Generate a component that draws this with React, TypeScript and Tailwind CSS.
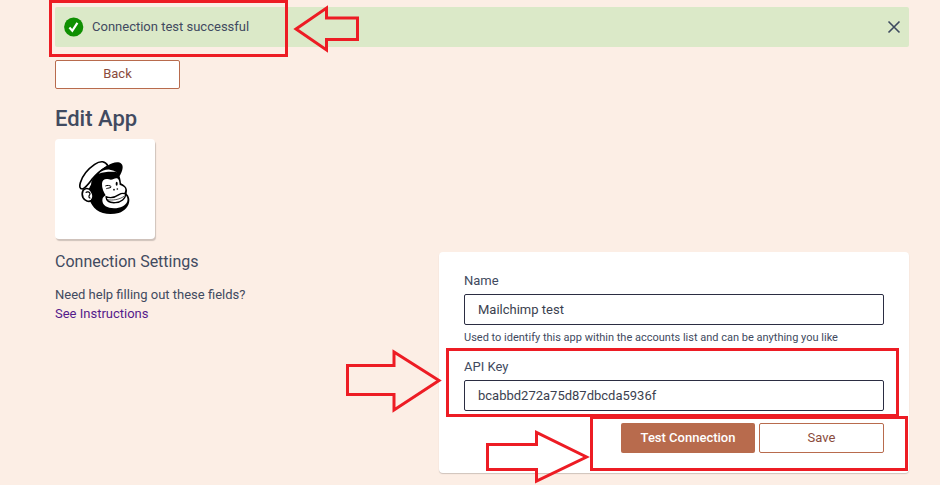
import React from "react";

type ArrowProps = {
  points: string;
  viewBox: string;
  className: string;
};

const Arrow: React.FC<ArrowProps> = ({ points, viewBox, className }) => (
  <svg
    viewBox={viewBox}
    className={`absolute pointer-events-none ${className}`}
    fill="none"
    stroke="#ed1c24"
    strokeWidth="3"
    aria-hidden="true"
  >
    <polygon points={points} />
  </svg>
);

const Highlight = ({ className }: { className: string }) => (
  <div className={`absolute pointer-events-none border-3 border-[#ed1c24] ${className}`} />
);

const MailchimpLogo = () => (
  <svg viewBox="105 177 180 180" className="w-[60px] h-[60px]" role="img" aria-label="Mailchimp">
    {/* head */}
    <path
      d="M146 268C156 244 170 228 186 218L236 222C240 230 242 240 243 250C252 254 260 261 261 270C261 275 260 278 260 281C266 287 269 295 268 302C267 318 254 333 236 339C214 345 186 343 170 330C159 321 153 311 150 303Z"
      fill="#000"
    />
    {/* cap */}
    <path
      d="M128 267C118 267 118 258 121 248C127 228 145 206 164 193C182 181 196 183 204 198C186 209 168 223 156 238C146 251 138 262 128 267Z"
      fill="#fff"
      stroke="#000"
      strokeWidth="5"
      strokeLinejoin="round"
    />
    <path
      d="M154 246C162 226 182 206 203 197C216 187 236 183 244 191C252 199 247 213 239 228C224 220 202 221 186 228C172 235 160 250 153 264Z"
      fill="#000"
    />
    <path d="M176 221C186 212 197 208 209 209C218 210 225 214 232 217C214 214 193 216 176 221Z" fill="#fff" />
    {/* ear */}
    <path
      d="M129 272C134 263 147 264 153 272C160 282 161 294 154 301C147 307 134 303 129 293C126 286 126 278 129 272Z"
      fill="#fff"
      stroke="#000"
      strokeWidth="5"
    />
    <path d="M137 278C142 273 149 276 150 281C150 285 146 286 147 290C147 293 149 294 151 293" fill="none" stroke="#000" strokeWidth="3.5" />
    {/* face */}
    <path
      d="M186 251C186 239 196 234 207 238C216 241 221 236 229 235C236 235 238 242 239 255C248 257 256 262 256 269C256 276 251 279 253 282C261 287 264 295 262 304C257 318 241 325 222 325C202 325 187 317 187 301C187 292 193 288 197 286C192 277 185 265 186 251Z"
      fill="#fff"
    />
    {/* eyes and nose */}
    <path d="M196 258C202 255 209 256 214 260M199 266C204 264 210 264 213 262" fill="none" stroke="#000" strokeWidth="3" />
    <ellipse cx="230" cy="251" rx="3" ry="6" fill="#000" />
    <circle cx="222" cy="269" r="2.5" fill="#000" />
    <circle cx="232" cy="267" r="2.5" fill="#000" />
    {/* mouth */}
    <path
      d="M198 290C211 295 227 291 237 284C243 280 251 279 257 282C257 296 243 307 226 308C211 309 199 304 198 290Z"
      fill="#fff"
      stroke="#000"
      strokeWidth="4"
      strokeLinejoin="round"
    />
    <path d="M202 299C217 302 238 299 252 289" fill="none" stroke="#000" strokeWidth="2" />
  </svg>
);

const outlineButton =
  "w-[125px] rounded-xs border border-[#b86b4d] bg-white text-[13px] text-[#8a4b3c]";
const inputStyle =
  "block w-full h-[31px] rounded-xs border border-[#2b2d42] bg-white px-[13px] text-[13px] text-[#3b3f4f] outline-none";

const App = () => {
  return (
    <main className="relative min-h-screen overflow-hidden bg-[#fceee5] pt-[7px] pl-[55px] pr-[31px] pb-3 font-[Roboto,sans-serif] text-[13px] text-[#414a60]">
      <div
        role="status"
        className="relative flex items-center h-10 rounded-xs bg-[#dbe9c8] pl-[9px] pr-2"
      >
        <svg viewBox="0 0 20 20" className="w-5 h-5 mr-2" aria-hidden="true">
          <circle cx="9.7" cy="10" r="9.6" fill="#0f8f02" />
          <path d="M5.4 10.6L8.3 13.8L13.4 5.8" fill="none" stroke="#fff" strokeWidth="2.2" />
        </svg>
        <span>Connection test successful</span>
        <button aria-label="Close" className="ml-auto flex items-center justify-center w-[14px] h-[14px]">
          <svg viewBox="0 0 14 14" className="w-[14px] h-[14px]" stroke="#3d4a5f" strokeWidth="1.6">
            <path d="M1.5 1.5L12.5 12.5M12.5 1.5L1.5 12.5" />
          </svg>
        </button>
        <Highlight className="-left-[6px] -top-[7px] w-[239px] h-[57px]" />
        <Arrow
          viewBox="0 0 70 50"
          points="4,25 34.5,4 34.5,14 65.5,14 65.5,35.5 34.5,35.5 34.5,46"
          className="left-[237px] -top-[3px] w-[70px] h-[50px]"
        />
      </div>

      <button className={`${outlineButton} block h-[29px] pb-[2px] mt-[13px]`}>Back</button>

      <h1 className="mt-[15px] mb-[5px] text-[22px] leading-[30px] font-medium">Edit App</h1>
      <div className="flex items-center justify-center w-[100px] h-[100px] rounded-sm bg-white shadow-[1px_2px_1px_#cfc2bb]">
        <MailchimpLogo />
      </div>

      <div className="grid grid-cols-[384px_1fr] mt-[13px]">
        <section>
          <h2 className="mb-[13px] text-base leading-5">Connection Settings</h2>
          <p className="leading-[19px]">Need help filling out these fields?</p>
          <a href="#instructions" className="block leading-[19px] text-[#551a8b]">
            See Instructions
          </a>
        </section>

        <form
          onSubmit={(e) => e.preventDefault()}
          className="rounded-sm bg-white pt-5 px-[25px] pb-5 shadow-[0_1px_1px_#cfc2bb]"
        >
          <label htmlFor="name" className="block mb-1 leading-[18px]">
            Name
          </label>
          <input id="name" type="text" defaultValue="Mailchimp test" className={inputStyle} />
          <p className="mt-1 mb-[11px] text-[11px] leading-[18px]">
            Used to identify this app within the accounts list and can be anything you like
          </p>

          <div className="relative">
            <label htmlFor="api-key" className="block mb-1 leading-[18px]">
              API Key
            </label>
            <input
              id="api-key"
              type="text"
              defaultValue="bcabbd272a75d87dbcda5936f"
              className={inputStyle}
            />
            <Highlight className="-left-[18px] -right-[15px] -top-[10px] -bottom-[6px]" />
            <Arrow
              viewBox="0 0 100 66"
              points="3.5,17.5 50,17.5 50,4 95,32.5 50,62 50,46.5 3.5,46.5"
              className="-left-[120px] -top-[10px] w-[100px] h-[66px]"
            />
          </div>

          <div className="relative flex gap-1 w-fit ml-auto mt-3">
            <button
              type="button"
              className="w-[134px] h-[30px] rounded-xs bg-[#b86b4d] text-[13px] font-medium text-white"
            >
              Test Connection
            </button>
            <button type="submit" className={`${outlineButton} h-[30px]`}>
              Save
            </button>
            <Highlight className="-left-[31px] -right-6 -top-[7px] -bottom-[18px]" />
            <Arrow
              viewBox="0 0 106 56"
              points="3.5,16.5 52.5,16.5 52.5,4.5 102.5,29 52.5,53 52.5,41.5 3.5,41.5"
              className="-left-[137px] top-[5px] w-[106px] h-[56px]"
            />
          </div>
        </form>
      </div>
    </main>
  );
};

export default App;
